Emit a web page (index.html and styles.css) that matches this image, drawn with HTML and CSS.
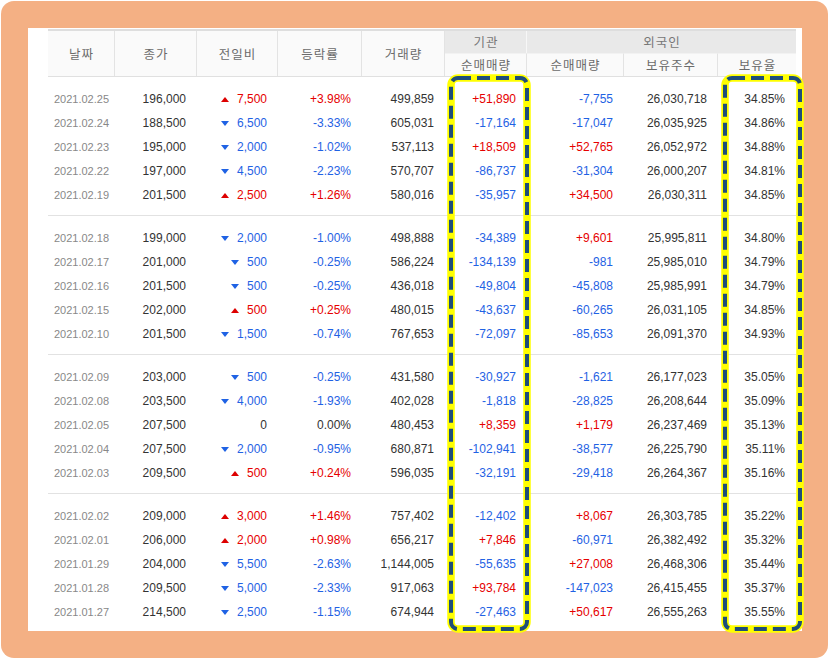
FILE: index.html
```html
<!DOCTYPE html>
<html lang="ko">
<head>
<meta charset="utf-8">
<title>투자자별 매매동향</title>
<link rel="stylesheet" href="styles.css">
</head>
<body>
<div class="frame">
  <div class="sheet">
    <div class="tbl">
      <div class="thead">
        <div class="th tall">날짜</div>
        <div class="th tall">종가</div>
        <div class="th tall">전일비</div>
        <div class="th tall">등락률</div>
        <div class="th tall">거래량</div>
        <div class="th grp">기관</div>
        <div class="th grp wide last">외국인</div>
        <div class="th sub">순매매량</div>
        <div class="th sub">순매매량</div>
        <div class="th sub">보유주수</div>
        <div class="th sub last">보유율</div>
      </div>

      <div class="group first">
        <div class="row"><span class="d">2021.02.25</span><span>196,000</span><span class="r"><i class="up"></i>7,500</span><span class="r">+3.98%</span><span>499,859</span><span class="r">+51,890</span><span class="b">-7,755</span><span>26,030,718</span><span>34.85%</span></div>
        <div class="row"><span class="d">2021.02.24</span><span>188,500</span><span class="b"><i class="dn"></i>6,500</span><span class="b">-3.33%</span><span>605,031</span><span class="b">-17,164</span><span class="b">-17,047</span><span>26,035,925</span><span>34.86%</span></div>
        <div class="row"><span class="d">2021.02.23</span><span>195,000</span><span class="b"><i class="dn"></i>2,000</span><span class="b">-1.02%</span><span>537,113</span><span class="r">+18,509</span><span class="r">+52,765</span><span>26,052,972</span><span>34.88%</span></div>
        <div class="row"><span class="d">2021.02.22</span><span>197,000</span><span class="b"><i class="dn"></i>4,500</span><span class="b">-2.23%</span><span>570,707</span><span class="b">-86,737</span><span class="b">-31,304</span><span>26,000,207</span><span>34.81%</span></div>
        <div class="row"><span class="d">2021.02.19</span><span>201,500</span><span class="r"><i class="up"></i>2,500</span><span class="r">+1.26%</span><span>580,016</span><span class="b">-35,957</span><span class="r">+34,500</span><span>26,030,311</span><span>34.85%</span></div>
      </div>

      <div class="group">
        <div class="row"><span class="d">2021.02.18</span><span>199,000</span><span class="b"><i class="dn"></i>2,000</span><span class="b">-1.00%</span><span>498,888</span><span class="b">-34,389</span><span class="r">+9,601</span><span>25,995,811</span><span>34.80%</span></div>
        <div class="row"><span class="d">2021.02.17</span><span>201,000</span><span class="b"><i class="dn"></i>500</span><span class="b">-0.25%</span><span>586,224</span><span class="b">-134,139</span><span class="b">-981</span><span>25,985,010</span><span>34.79%</span></div>
        <div class="row"><span class="d">2021.02.16</span><span>201,500</span><span class="b"><i class="dn"></i>500</span><span class="b">-0.25%</span><span>436,018</span><span class="b">-49,804</span><span class="b">-45,808</span><span>25,985,991</span><span>34.79%</span></div>
        <div class="row"><span class="d">2021.02.15</span><span>202,000</span><span class="r"><i class="up"></i>500</span><span class="r">+0.25%</span><span>480,015</span><span class="b">-43,637</span><span class="b">-60,265</span><span>26,031,105</span><span>34.85%</span></div>
        <div class="row"><span class="d">2021.02.10</span><span>201,500</span><span class="b"><i class="dn"></i>1,500</span><span class="b">-0.74%</span><span>767,653</span><span class="b">-72,097</span><span class="b">-85,653</span><span>26,091,370</span><span>34.93%</span></div>
      </div>

      <div class="group">
        <div class="row"><span class="d">2021.02.09</span><span>203,000</span><span class="b"><i class="dn"></i>500</span><span class="b">-0.25%</span><span>431,580</span><span class="b">-30,927</span><span class="b">-1,621</span><span>26,177,023</span><span>35.05%</span></div>
        <div class="row"><span class="d">2021.02.08</span><span>203,500</span><span class="b"><i class="dn"></i>4,000</span><span class="b">-1.93%</span><span>402,028</span><span class="b">-1,818</span><span class="b">-28,825</span><span>26,208,644</span><span>35.09%</span></div>
        <div class="row"><span class="d">2021.02.05</span><span>207,500</span><span>0</span><span>0.00%</span><span>480,453</span><span class="r">+8,359</span><span class="r">+1,179</span><span>26,237,469</span><span>35.13%</span></div>
        <div class="row"><span class="d">2021.02.04</span><span>207,500</span><span class="b"><i class="dn"></i>2,000</span><span class="b">-0.95%</span><span>680,871</span><span class="b">-102,941</span><span class="b">-38,577</span><span>26,225,790</span><span>35.11%</span></div>
        <div class="row"><span class="d">2021.02.03</span><span>209,500</span><span class="r"><i class="up"></i>500</span><span class="r">+0.24%</span><span>596,035</span><span class="b">-32,191</span><span class="b">-29,418</span><span>26,264,367</span><span>35.16%</span></div>
      </div>

      <div class="group last">
        <div class="row"><span class="d">2021.02.02</span><span>209,000</span><span class="r"><i class="up"></i>3,000</span><span class="r">+1.46%</span><span>757,402</span><span class="b">-12,402</span><span class="r">+8,067</span><span>26,303,785</span><span>35.22%</span></div>
        <div class="row"><span class="d">2021.02.01</span><span>206,000</span><span class="r"><i class="up"></i>2,000</span><span class="r">+0.98%</span><span>656,217</span><span class="r">+7,846</span><span class="b">-60,971</span><span>26,382,492</span><span>35.32%</span></div>
        <div class="row"><span class="d">2021.01.29</span><span>204,000</span><span class="b"><i class="dn"></i>5,500</span><span class="b">-2.63%</span><span>1,144,005</span><span class="b">-55,635</span><span class="r">+27,008</span><span>26,468,306</span><span>35.44%</span></div>
        <div class="row"><span class="d">2021.01.28</span><span>209,500</span><span class="b"><i class="dn"></i>5,000</span><span class="b">-2.33%</span><span>917,063</span><span class="r">+93,784</span><span class="b">-147,023</span><span>26,415,455</span><span>35.37%</span></div>
        <div class="row"><span class="d">2021.01.27</span><span>214,500</span><span class="b"><i class="dn"></i>2,500</span><span class="b">-1.15%</span><span>674,944</span><span class="b">-27,463</span><span class="r">+50,617</span><span>26,555,263</span><span>35.55%</span></div>
      </div>
    </div>
  </div>

  <svg class="hl hl-inst" width="84" height="559" viewBox="0 0 84 559" aria-hidden="true">
    <rect x="4" y="4" width="76" height="551" rx="7" ry="7" fill="none" stroke="#ffff00" stroke-width="7.5"/>
    <rect x="4" y="4" width="76" height="551" rx="7" ry="7" fill="none" stroke="#1f4e79" stroke-width="4" stroke-dasharray="13 6"/>
  </svg>
  <svg class="hl hl-for" width="83" height="559" viewBox="0 0 83 559" aria-hidden="true">
    <rect x="4" y="4" width="75" height="551" rx="7" ry="7" fill="none" stroke="#ffff00" stroke-width="7.5"/>
    <rect x="4" y="4" width="75" height="551" rx="7" ry="7" fill="none" stroke="#1f4e79" stroke-width="4" stroke-dasharray="13 6"/>
  </svg>
</div>
</body>
</html>
```

FILE: styles.css
```css
html, body {
  margin: 0;
  padding: 0;
  background: #ffffff;
}

body {
  font-family: "Liberation Sans", Arial, "Noto Sans CJK KR", sans-serif;
  font-size: 12px;
  color: #333333;
}

.frame {
  position: relative;
  box-sizing: border-box;
  margin: 1px 0 0 1px;
  width: 827px;
  height: 657px;
  padding: 27px 26px 0 27px;
  background: #f4b084;
  border-radius: 13px;
}

.sheet {
  box-sizing: border-box;
  width: 774px;
  height: 603px;
  padding: 1px 6px 0 20px;
  background: #ffffff;
}

.tbl {
  width: 748px;
  border-top: 2px solid #dedede;
}

.thead,
.row {
  display: grid;
  grid-template-columns: 67px 82px 81px 84px 83px 82px 97px 94px 78px;
}

.thead {
  grid-template-rows: 22px 23px;
  border-bottom: 1px solid #e0e0e0;
}

.th {
  box-sizing: border-box;
  display: flex;
  align-items: center;
  justify-content: center;
  padding-left: 1px;
  background: #fafafa;
  border-right: 1px solid #e3e3e3;
  font-family: "Noto Sans CJK KR", "Noto Sans", sans-serif;
  font-size: 12.5px;
  letter-spacing: 1px;
  line-height: 16px;
  color: #6b6b6b;
}

.th.tall {
  grid-row: span 2;
}

.th.grp {
  background: #e9e9e9;
  border-right: 1px solid #f7f7f7;
  color: #777777;
}

.th.wide {
  grid-column: span 3;
}

.th.sub {
  border-top: 1px solid #f2f2f2;
}

.th.last {
  border-right: none;
}

.group {
  padding: 10px 0 8px;
  border-bottom: 1px solid #e2e2e2;
}

.group.first {
  padding-top: 10px;
}

.group.last {
  border-bottom: none;
}

.row {
  height: 24px;
  line-height: 24px;
}

.row > span {
  box-sizing: border-box;
  text-align: right;
  padding-right: 11px;
  white-space: nowrap;
}

.row > span.d {
  text-align: center;
  padding-right: 0;
  font-size: 11px;
  color: #888888;
}

.r {
  color: #e60000;
}

.b {
  color: #1f62e4;
}

.up,
.dn {
  display: inline-block;
  width: 0;
  height: 0;
  margin-right: 8px;
  border-left: 4px solid transparent;
  border-right: 4px solid transparent;
  vertical-align: 1px;
}

.up {
  border-bottom: 5px solid #dd0000;
}

.dn {
  border-top: 5px solid #1f62e4;
}

.hl {
  position: absolute;
  top: 73px;
  display: block;
}

.hl-inst {
  left: 446px;
}

.hl-for {
  left: 720px;
}
```
